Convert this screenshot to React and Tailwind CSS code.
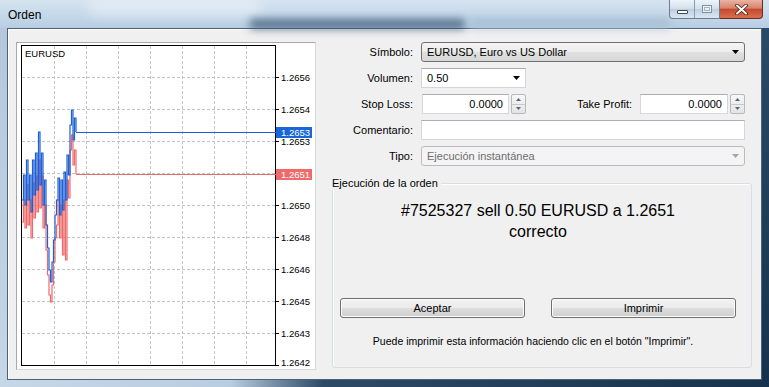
import React from 'react';

const bid = [200,175,205,160,200,175,212,160,195,153,190,132,185,153,205,180,225,248,270,282,262,240,215,200,178,215,180,210,172,200,155,175,125,110,140,118,132];
const ask = [222,200,228,185,225,200,238,183,218,176,212,160,208,176,228,205,250,275,295,302,285,262,238,225,200,238,205,255,200,260,180,198,150,135,165,150,174];

const stepPath = (vals) =>
  vals.map((y, i) => {
    const x = 22 + i * 1.5;
    return i === 0 ? `M${x} ${y}` : `H${x} V${y}`;
  }).join(' ');

const gridY = [
  [77, '1.2656'], [109, '1.2654'], [141, '1.2653'], [173, '1.2651'], [205, '1.2650'],
  [237, '1.2648'], [269, '1.2646'], [301, '1.2645'], [333, '1.2643'],
];
const gridX = [54, 86, 118, 150, 182, 214, 246];

function Chart() {
  return (
    <div className="w-[300px] h-[328px] border border-[#a9a9a9] border-r-[#d8d8d8] border-b-[#d8d8d8] bg-white shrink-0">
      <svg width="298" height="326" viewBox="17 43 298 326" className="block">
        {gridX.map((x) => (
          <line key={x} x1={x + 0.5} y1="46" x2={x + 0.5} y2="365" stroke="#c4c4c4" strokeDasharray="3 2" />
        ))}
        {gridY.map(([y]) => (
          <line key={y} x1="22" y1={y + 0.5} x2="275" y2={y + 0.5} stroke="#c4c4c4" strokeDasharray="3 2" />
        ))}
        <rect x="21.5" y="45.5" width="254" height="320" fill="none" stroke="#000" />
        {[...gridY.map(([y]) => y), 365].map((y) => (
          <line key={y} x1="276" y1={y + 0.5} x2="279" y2={y + 0.5} stroke="#000" />
        ))}
        <g fontFamily="Liberation Sans, Arial, sans-serif" fontSize="9.5" fill="#000">
          {gridY.map(([y, t]) => (
            <text key={t} x="281" y={y + 3.5}>{t}</text>
          ))}
          <text x="281" y="365.5">1.2642</text>
          <text x="25" y="56.5">EURUSD</text>
        </g>
        <path d={stepPath(ask)} fill="none" stroke="#ee6a6a" strokeWidth="1.2" />
        <path d={stepPath(bid)} fill="none" stroke="#1c5fd6" strokeWidth="1.2" />
        <line x1="76" y1="174.5" x2="276" y2="174.5" stroke="#ee6a6a" />
        <line x1="76" y1="132.5" x2="276" y2="132.5" stroke="#1c5fd6" />
        <rect x="276" y="127" width="36" height="11" fill="#1a66d8" />
        <rect x="276" y="169" width="36" height="11" fill="#f06a6a" />
        <g fontFamily="Liberation Sans, Arial, sans-serif" fontSize="9.5" fill="#fff">
          <text x="281" y="136">1.2653</text>
          <text x="281" y="178">1.2651</text>
        </g>
      </svg>
    </div>
  );
}

function Arrow({ color = '#000' }) {
  return (
    <svg width="7" height="4" viewBox="0 0 7 4" className="shrink-0">
      <polygon points="0,0 7,0 3.5,4" fill={color} />
    </svg>
  );
}

function Spinner() {
  return (
    <div className="w-[15px] h-[20px] ml-[2px] flex flex-col rounded-[2px] border border-[#b4b8bf] bg-[linear-gradient(180deg,#f7f7f7,#e4e4e4)]">
      <div className="flex-1 flex items-center justify-center border-b border-[#c6c9ce]">
        <svg width="5" height="3" viewBox="0 0 5 3"><polygon points="0,3 5,3 2.5,0" fill="#56677b" /></svg>
      </div>
      <div className="flex-1 flex items-center justify-center">
        <svg width="5" height="3" viewBox="0 0 5 3"><polygon points="0,0 5,0 2.5,3" fill="#56677b" /></svg>
      </div>
    </div>
  );
}

function Row({ label, children }) {
  return (
    <div className="flex items-center h-[20px]">
      <div className="w-[84px] text-right text-[11px] pr-[1px]">{label}</div>
      <div className="ml-[7px] flex items-center">{children}</div>
    </div>
  );
}

const textBox = 'h-[20px] bg-white border border-[#d3d6dc] border-t-[#abadb3] text-[11px] flex items-center';
const vistaBtn = 'h-[20px] w-[185px] rounded-[3px] border border-[#707070] bg-[linear-gradient(180deg,#f2f2f2_0%,#ebebeb_50%,#dddddd_51%,#cfcfcf_100%)] text-[11px] flex items-center justify-center shadow-[inset_0_0_0_1px_#fcfcfc]';

function CaptionButtons() {
  return (
    <div className="flex h-[19px] mr-[6px]">
      <div className="flex rounded-bl-[4px] border border-t-0 border-[#6b7c8f] bg-[linear-gradient(180deg,#eef4fa_0%,#d2dfeb_48%,#bccfe0_52%,#dbe7f2_100%)]">
        <div className="w-[25px] flex items-center justify-center border-r border-[#8b9bad]">
          <div className="w-[11px] h-[4px] mt-[5px] bg-white border border-[#3b4a5b] rounded-[1px]" />
        </div>
        <div className="w-[24px] flex items-center justify-center">
          <div className="w-[10px] h-[8px] border border-[#8090a2] bg-white/60 flex items-center justify-center">
            <div className="w-[6px] h-[4px] border border-[#a8b6c4]" />
          </div>
        </div>
      </div>
      <div className="w-[43px] flex items-center justify-center rounded-br-[4px] border border-t-0 border-l-0 border-[#6a2a1e] bg-[linear-gradient(180deg,#eab3a3_0%,#d8826a_45%,#c44a2e_52%,#d77050_100%)]">
        <svg width="13" height="11" viewBox="0 0 13 11">
          <path d="M2 1.5 L11 9.5 M11 1.5 L2 9.5" stroke="#4a1a12" strokeWidth="3.6" strokeLinecap="round" />
          <path d="M2 1.5 L11 9.5 M11 1.5 L2 9.5" stroke="#fff" strokeWidth="2" strokeLinecap="round" />
        </svg>
      </div>
    </div>
  );
}

export default function App() {
  return (
    <div className="w-[769px] h-[387px] flex flex-col overflow-hidden bg-[#bcd0e3] font-['Liberation_Sans',Arial,sans-serif] text-black">
      <div className="relative h-[28px] flex items-start justify-between bg-[linear-gradient(180deg,#d6e4f0_0%,#c3d7e9_60%,#b7cde2_100%)]">
        <div className="absolute left-[90px] top-0 w-[170px] h-[16px] bg-white/40 blur-[6px]" />
        <div className="absolute left-[250px] top-[19px] w-[215px] h-[10px] bg-[#3a5876] opacity-80 blur-[4px]" />
        <div className="absolute left-[470px] top-[18px] w-[200px] h-[10px] bg-[#a9bfd3] blur-[4px]" />
        <div className="relative ml-[8px] mt-[8px] text-[12px] leading-[14px]">Orden</div>
        <div className="relative"><CaptionButtons /></div>
      </div>
      <div className="flex flex-1">
        <div className="w-[7px] bg-[linear-gradient(180deg,#b3c8dc,#c4d6e7)]" />
        <div className="flex-1 flex border border-[#4d6074] bg-[#f0f0f0] shadow-[inset_1px_1px_0_#ffffff] pl-[8px] pt-[13px]">
          <Chart />
          <div className="ml-[14px] flex flex-col w-[422px]">
            <div className="flex flex-col gap-[6px]">
              <Row label="Símbolo:">
                <div className="w-[324px] h-[20px] rounded-[3px] border border-[#707070] bg-[linear-gradient(180deg,#f4f4f4_0%,#ececec_50%,#e0e0e0_51%,#d6d6d6_100%)] flex items-center justify-between pl-[5px] pr-[5px] text-[11px]">
                  <span>EURUSD, Euro vs US Dollar</span>
                  <Arrow />
                </div>
              </Row>
              <Row label="Volumen:">
                <div className={`${textBox} w-[105px] justify-between pl-[5px] pr-[5px]`}>
                  <span>0.50</span>
                  <Arrow />
                </div>
              </Row>
              <div className="flex items-center h-[20px]">
                <div className="w-[84px] text-right text-[11px] pr-[1px]">Stop Loss:</div>
                <div className={`${textBox} ml-[8px] w-[87px] justify-end pr-[5px]`}>0.0000</div>
                <Spinner />
                <div className="w-[106px] text-right text-[11px]">Take Profit:</div>
                <div className={`${textBox} ml-[8px] w-[88px] justify-end pr-[5px]`}>0.0000</div>
                <Spinner />
              </div>
              <Row label="Comentario:">
                <div className={`${textBox} w-[324px]`} />
              </Row>
              <Row label="Tipo:">
                <div className="w-[324px] h-[20px] rounded-[3px] border border-[#b8bcc0] bg-[#f4f4f4] flex items-center justify-between pl-[5px] pr-[5px] text-[11px] text-[#6d6d6d]">
                  <span>Ejecución instantánea</span>
                  <Arrow color="#a6a6a6" />
                </div>
              </Row>
            </div>
            <div className="relative mt-[17px] ml-[2px] w-[420px] h-[185px] rounded-[3px] border border-[#d5dfe5] shadow-[inset_1px_1px_0_#fff] flex flex-col pl-[7px] pr-[15px]">
              <div className="absolute -top-[7px] left-[-1px] bg-[#f0f0f0] pr-[3px] text-[11px] leading-[13px]">Ejecución de la orden</div>
              <div className="h-[42px] mt-[16px] text-[16px] leading-[21px] text-center">
                <div>#7525327 sell 0.50 EURUSD a 1.2651</div>
                <div>correcto</div>
              </div>
              <div className="mt-[56px] flex justify-between">
                <div className={vistaBtn}>Aceptar</div>
                <div className={vistaBtn}>Imprimir</div>
              </div>
              <div className="mt-[16px] pr-[10px] text-[10.5px] leading-[14px] text-center">
                Puede imprimir esta información haciendo clic en el botón "Imprimir".
              </div>
            </div>
          </div>
        </div>
        <div className="w-[7px] bg-[linear-gradient(180deg,#2b4a68,#16324d)]" />
      </div>
      <div className="h-[7px] bg-[linear-gradient(90deg,#c6d7e7_0%,#b9cde0_30%,#2c4966_42%,#17324c_100%)]" />
    </div>
  );
}
